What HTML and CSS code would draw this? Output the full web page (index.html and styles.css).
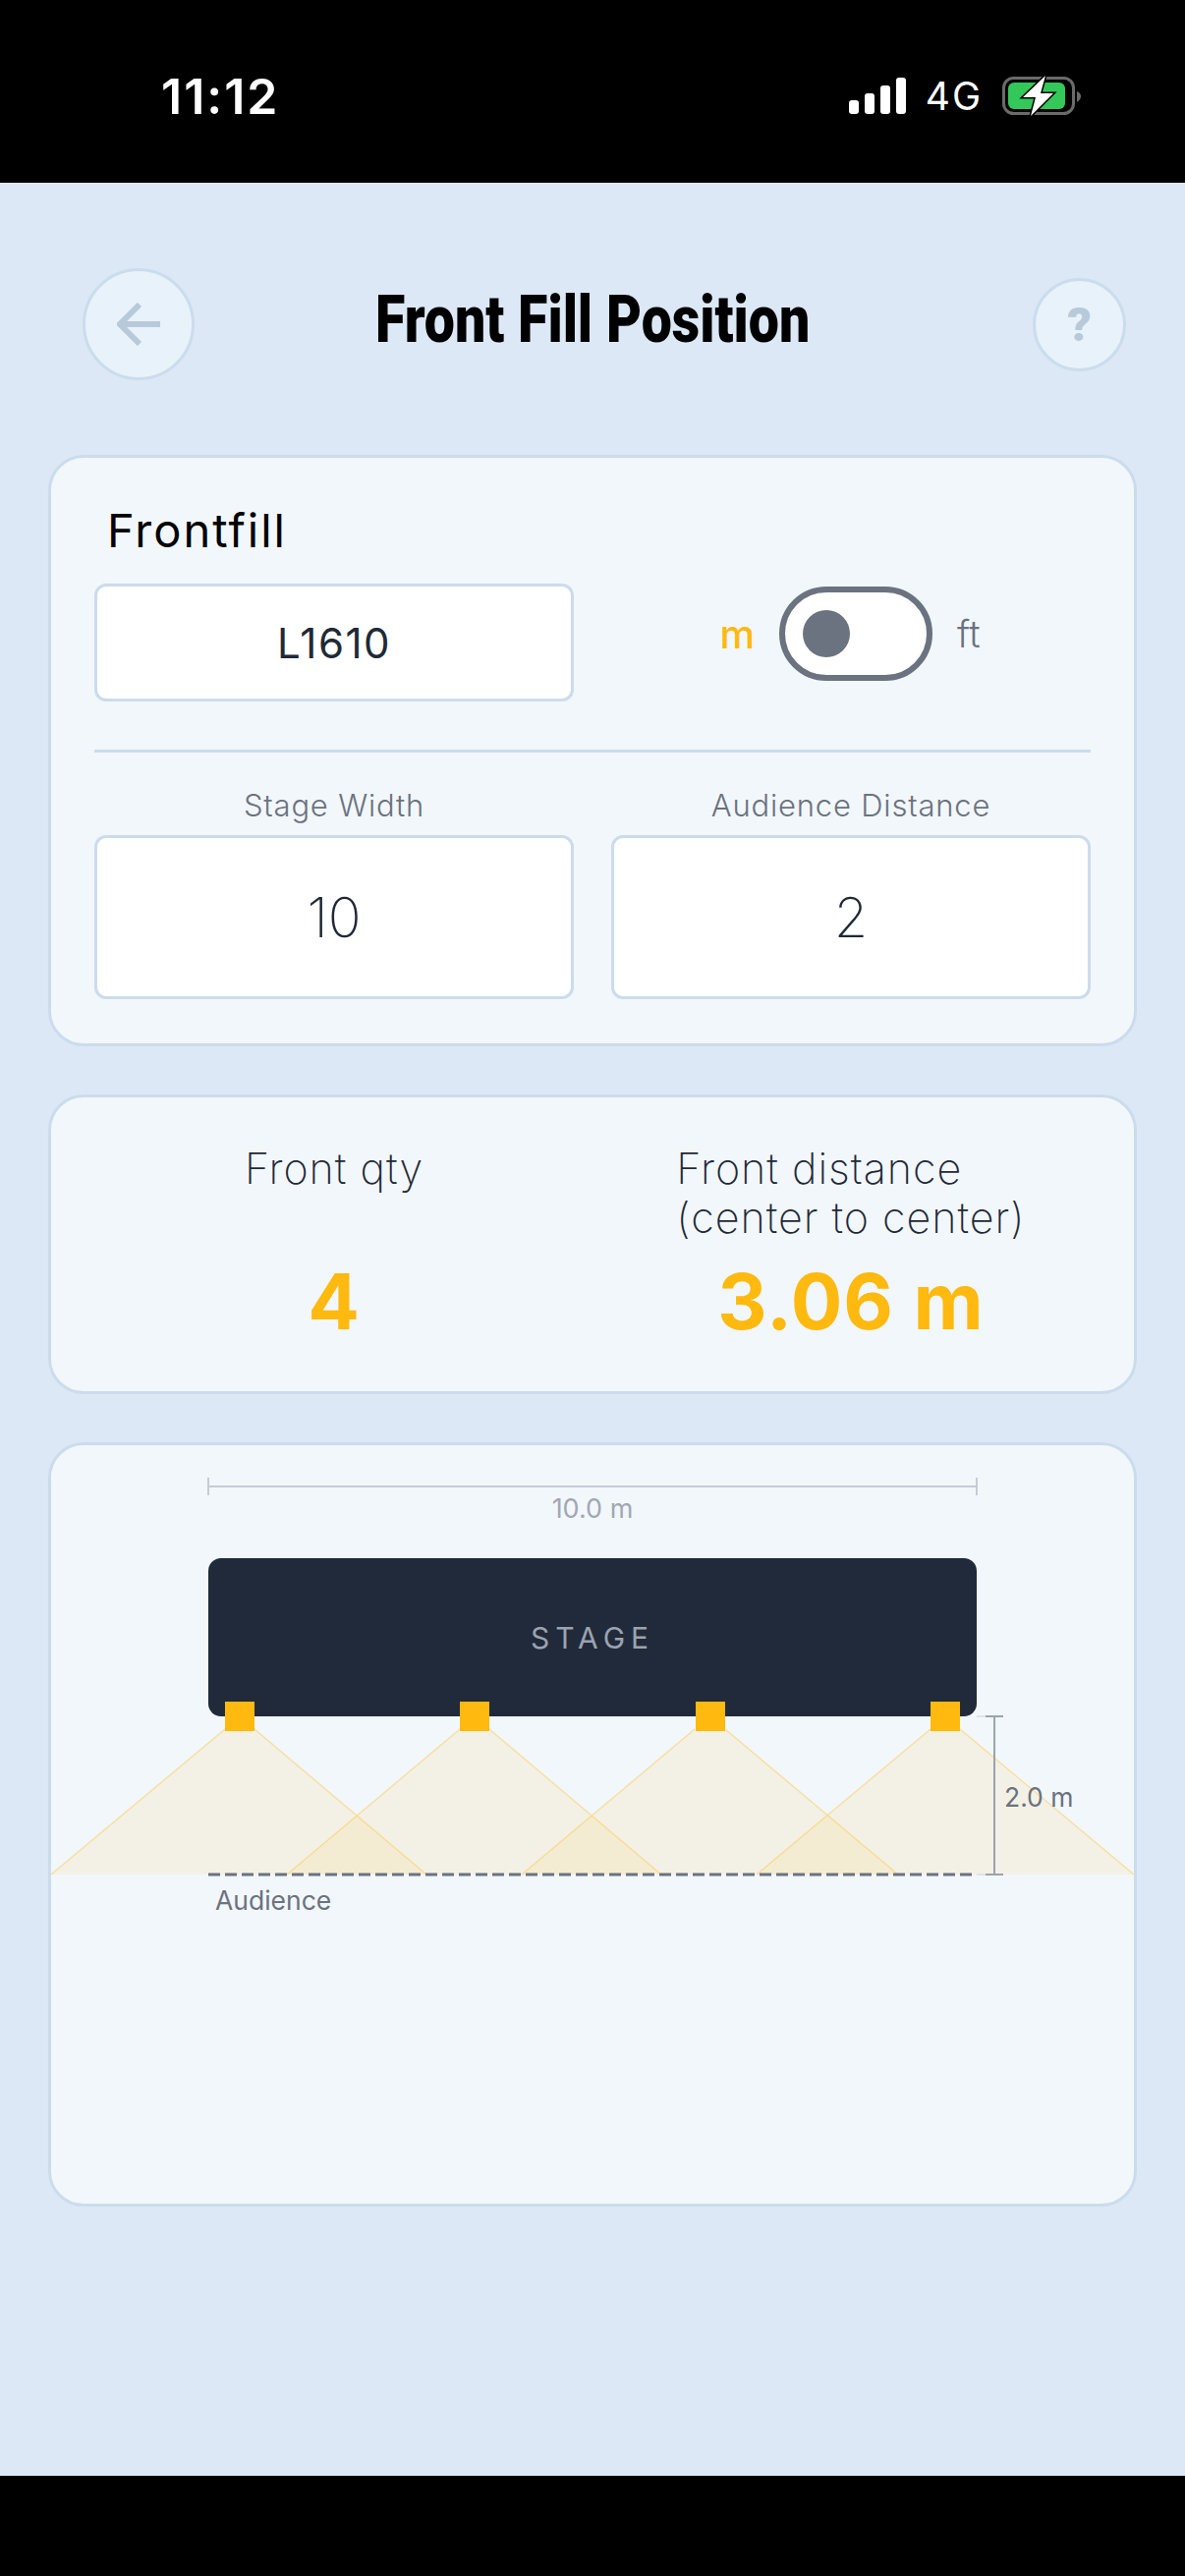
FILE: index.html
```html
<!DOCTYPE HTML>

<html>
<head>
<meta charset="UTF-8">
<meta name="viewport" content="width=device-width, initial-scale=1">
<title>Front Fill Position</title>
<link rel="stylesheet" href="styles.css">
</head>

<body>

<!-- status bar -->
<div class="status-bar">
    <span class="time">11:12</span>
    <div class="status-icons">
        <svg class="signal" width="58" height="37" viewBox="0 0 58 37">
            <rect x="0" y="23" width="10" height="14" rx="3"></rect>
            <rect x="16" y="16" width="10" height="21" rx="3"></rect>
            <rect x="32" y="8" width="10" height="29" rx="3"></rect>
            <rect x="48" y="0" width="10" height="37" rx="3"></rect>
        </svg>
        <span class="network">4G</span>
        <svg class="battery" width="82" height="44" viewBox="0 0 82 44">
            <rect class="battery-case" x="1.5" y="3.5" width="71" height="36" rx="10"></rect>
            <rect class="battery-level" x="6" y="8" width="58" height="27" rx="6"></rect>
            <path class="battery-tip" d="M76 17 C79 18 80 20 80 22 C80 24 79 26 76 28 Z"></path>
            <path class="battery-bolt" d="M44 1 L21 23 H34 L29 42 L52 19 H39 Z"></path>
        </svg>
    </div>
</div>

<div class="screen">

    <div class="header">
        <button class="round-btn back-btn">
            <svg width="44" height="44" viewBox="0 0 44 44">
                <path d="M44 22 H3 M23 2 L3 22 L23 42"></path>
            </svg>
        </button>
        <h1 class="title"><span>Front Fill Position</span></h1>
        <button class="round-btn help-btn">?</button>
    </div>

    <!-- inputs -->
    <div class="card input-card">
        <div class="card-title">Frontfill</div>
        <div class="two-cols">
            <div class="field model-field">L1610</div>
            <div class="units">
                <span class="unit unit-on">m</span>
                <div class="toggle"><div class="knob"></div></div>
                <span class="unit">ft</span>
            </div>
        </div>
        <div class="divider"></div>
        <div class="two-cols">
            <div>
                <div class="field-label">Stage Width</div>
                <div class="field value-field">10</div>
            </div>
            <div>
                <div class="field-label">Audience Distance</div>
                <div class="field value-field">2</div>
            </div>
        </div>
    </div>

    <!-- results -->
    <div class="card result-card">
        <div class="two-cols">
            <div class="result">
                <div class="result-label">Front qty</div>
                <div class="result-value">4</div>
            </div>
            <div class="result">
                <div class="result-label">Front distance<br>(center to center)</div>
                <div class="result-value">3.06 m</div>
            </div>
        </div>
    </div>

    <!-- diagram, viewBox uses page coordinates -->
    <div class="card diagram-card">
        <svg class="diagram" width="1102" height="772" viewBox="52 1471 1102 772">
            <path class="dim-light" d="M212 1513 H994 M212 1504 V1522 M994 1504 V1522"></path>
            <text class="label-light" x="603" y="1545" text-anchor="middle">10.0 m</text>

            <rect class="stage" x="212" y="1586" width="782" height="161" rx="13"></rect>
            <text class="stage-text" x="603" y="1678" text-anchor="middle">STAGE</text>

            <polygon class="cone" points="229,1760 259,1760 434,1908 52,1908"></polygon>
            <polygon class="cone" points="468,1760 498,1760 673,1908 292,1908"></polygon>
            <polygon class="cone" points="707,1760 738,1760 914,1908 531,1908"></polygon>
            <polygon class="cone" points="947,1760 977,1760 1154,1908 770,1908"></polygon>
            <path class="cone-edge" d="M229 1760 L52 1908 M259 1760 L434 1908 M468 1760 L292 1908 M498 1760 L673 1908 M707 1760 L531 1908 M738 1760 L914 1908 M947 1760 L770 1908 M977 1760 L1154 1908"></path>

            <rect class="speaker" x="229" y="1732" width="30" height="30"></rect>
            <rect class="speaker" x="468" y="1732" width="30" height="30"></rect>
            <rect class="speaker" x="708" y="1732" width="30" height="30"></rect>
            <rect class="speaker" x="947" y="1732" width="30" height="30"></rect>

            <path class="audience-line" d="M212 1908 H994"></path>
            <text class="label-dark" x="219" y="1944">Audience</text>

            <path class="dim-tick" d="M994 1747 H1003 M994 1908 H1003"></path>
            <path class="dim-dark" d="M1012 1747 V1908 M1003 1747 H1021 M1003 1908 H1021"></path>
            <text class="label-dark" x="1022" y="1839">2.0 m</text>
        </svg>
    </div>

</div>

<div class="bottom-bar"></div>

</body>
</html>
```

FILE: styles.css
```css
html, body {
    margin: 0;
    height: 2622px;
    font-family: "Inter", "Liberation Sans", sans-serif;
}

body {
    display: flex;
    flex-direction: column;
    background-color: #000;
}

.status-bar {
    height: 186px;
    flex-shrink: 0;
    display: flex;
    justify-content: space-between;
    padding: 70px 104px 0 164px;
    box-sizing: border-box;
    color: #fff;
}

.time {
    font-size: 50px;
    font-weight: 600;
    line-height: 56px;
    letter-spacing: 2px;
}

.status-icons {
    display: flex;
    align-items: flex-start;
}

.signal {
    margin: 9px 20px 0 0;
}
.signal rect {
    fill: #fff;
}

.network {
    font-size: 39px;
    line-height: 56px;
    letter-spacing: 2px;
    margin-right: 20px;
}

.battery {
    margin-top: 6px;
}
.battery-case {
    fill: none;
    stroke: #6a6a6a;
    stroke-width: 3;
}
.battery-level {
    fill: #34c759;
}
.battery-tip {
    fill: #6a6a6a;
}
.battery-bolt {
    fill: #fff;
    stroke: #000;
    stroke-width: 3;
    paint-order: stroke;
}

.screen {
    height: 2334px;
    flex-shrink: 0;
    background-color: #dce8f6;
    padding-top: 87px;
    box-sizing: border-box;
}

.bottom-bar {
    flex: 1;
    background-color: #000;
}

.header {
    display: grid;
    grid-template-columns: 1fr auto 1fr;
    align-items: center;
    padding: 0 60px;
    height: 114px;
    margin-bottom: 76px;
}

.round-btn {
    display: flex;
    align-items: center;
    justify-content: center;
    padding: 0;
    border: 3px solid #cbdcec;
    border-radius: 50%;
    background-color: #e8f2fb;
    box-sizing: border-box;
}

.back-btn {
    width: 114px;
    height: 114px;
    margin-left: 24px;
}
.back-btn path {
    fill: none;
    stroke: #b8c9da;
    stroke-width: 6;
}

.help-btn {
    width: 95px;
    height: 95px;
    justify-self: end;
    font-family: "Roboto", sans-serif;
    font-size: 48px;
    font-weight: 900;
    color: #b8c9da;
}

.title {
    margin: 0 0 10px;
    font-family: "Roboto", sans-serif;
    font-size: 66px;
    font-weight: 900;
    color: #000;
    white-space: nowrap;
    width: 440px;
    display: flex;
    justify-content: center;
}
.title span {
    display: inline-block;
    transform: scaleX(0.84);
}

.card {
    margin: 0 49px 49px;
    background-color: #f2f7fc;
    border: 3px solid #cbdcec;
    border-radius: 36px;
    padding: 0 44px;
    box-sizing: border-box;
    overflow: hidden;
}

.two-cols {
    display: grid;
    grid-template-columns: 488px 488px;
    column-gap: 38px;
}

.input-card {
    height: 602px;
    padding-top: 44px;
}

.card-title {
    font-size: 47px;
    font-weight: 400;
    line-height: 60px;
    letter-spacing: 2px;
    color: #000;
    margin: 0 0 24px 13px;
}

.field {
    display: flex;
    align-items: center;
    justify-content: center;
    background-color: #fff;
    border: 3px solid #cbdcec;
    border-radius: 12px;
    box-sizing: border-box;
    color: #1f2937;
}

.model-field {
    height: 120px;
    font-size: 42px;
    font-weight: 400;
    letter-spacing: 1.5px;
}

.value-field {
    height: 167px;
    font-size: 56px;
    font-weight: 200;
}

.units {
    display: flex;
    align-items: center;
    justify-content: center;
    align-self: start;
    gap: 25px;
    margin: 3px 0 0 -2px;
}

.unit {
    font-size: 38px;
    font-weight: 300;
    color: #6b7280;
}
.unit-on {
    font-size: 40px;
    font-weight: 500;
    color: #ffb90f;
}

.toggle {
    display: flex;
    align-items: center;
    width: 156px;
    height: 96px;
    padding-left: 18px;
    border: 6px solid #6b7280;
    border-radius: 48px;
    background-color: #fff;
    box-sizing: border-box;
}

.knob {
    width: 48px;
    height: 48px;
    border-radius: 50%;
    background-color: #6b7280;
}

.divider {
    height: 3px;
    margin: 49px 0 34px;
    background-color: #cbdcec;
}

.field-label {
    font-size: 31px;
    font-weight: 300;
    line-height: 40px;
    letter-spacing: 0.8px;
    text-align: center;
    color: #6b7280;
    margin-bottom: 10px;
}

.result-card {
    height: 305px;
    padding-top: 47px;
}

.result {
    display: flex;
    flex-direction: column;
    align-items: center;
}

.result-label {
    min-height: 100px;
    font-size: 43px;
    font-weight: 250;
    line-height: 50px;
    letter-spacing: 1px;
    color: #1f2937;
    white-space: nowrap;
}

.result-value {
    margin-top: 16px;
    font-size: 78px;
    font-weight: 700;
    line-height: 90px;
    letter-spacing: 1px;
    color: #ffb90f;
}

.diagram-card {
    height: 778px;
    margin-bottom: 0;
    padding: 0;
}

.diagram {
    display: block;
}

.stage {
    fill: #202a3a;
}
.stage-text {
    font-size: 30px;
    letter-spacing: 6px;
    fill: #9ca3af;
}

.speaker {
    fill: #ffb90f;
}

.cone {
    fill: #ffb90f;
    fill-opacity: 0.09;
}
.cone-edge {
    fill: none;
    stroke: #ffb90f;
    stroke-opacity: 0.35;
    stroke-width: 1.5;
}

.audience-line {
    fill: none;
    stroke: #6b7280;
    stroke-width: 3;
    stroke-dasharray: 12 5;
}

.dim-light {
    fill: none;
    stroke: #c5cbd6;
    stroke-width: 2;
}
.dim-dark {
    fill: none;
    stroke: #9ca3af;
    stroke-width: 2;
}
.dim-tick {
    fill: none;
    stroke: #dfe3e8;
    stroke-width: 2;
}

.label-light {
    font-size: 27px;
    fill: #a1a7b4;
}
.label-dark {
    font-size: 26.5px;
    fill: #6b7280;
}
```
